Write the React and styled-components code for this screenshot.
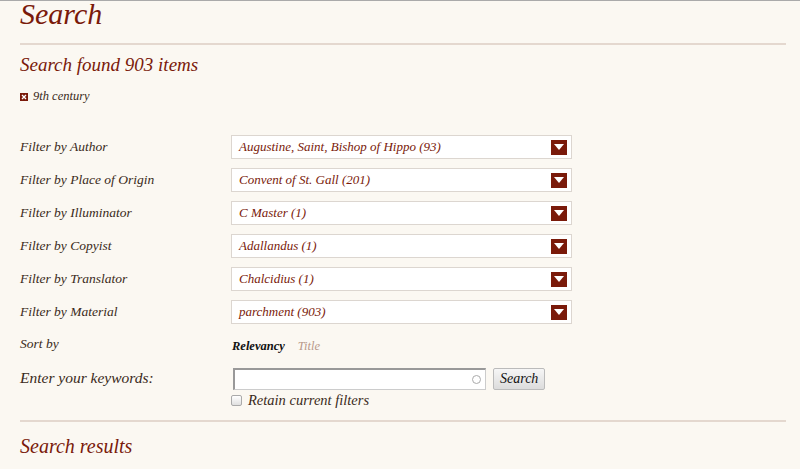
import { Fragment } from 'react';
import styled, { createGlobalStyle } from 'styled-components';

const GlobalStyle = createGlobalStyle`
  body {
    margin: 0;
    background: #fbf8f2;
    font-family: "Liberation Serif", "DejaVu Serif", serif;
    font-style: italic;
  }
`;

const Page = styled.div`
  border-top: 1px solid #aaa;
  padding: 0 14px 0 20px;
  color: #7a1a0a;
`;

const Title = styled.h1`
  margin: 0;
  font-size: 30px;
  font-weight: normal;
  line-height: 26px;
  height: 28px;
`;

const Rule = styled.hr`
  border: none;
  border-top: 2px solid #e4d8cf;
  margin: ${(p) => p.$m || '14px 0 0'};
`;

const Subtitle = styled.h2`
  margin: ${(p) => p.$m || '8px 0 0'};
  font-size: ${(p) => p.$size || '19px'};
  font-weight: normal;
  line-height: 24px;
`;

const Facet = styled.div`
  display: flex;
  align-items: center;
  gap: 5px;
  margin-top: 12px;
  font-size: 12.5px;
  color: #3a2a20;
`;

const CloseBox = styled.span`
  display: inline-flex;
  align-items: center;
  justify-content: center;
  width: 8px;
  height: 8px;
  background: #7a1a0a;
`;

const Form = styled.div`
  margin-top: 31px;
  display: grid;
  grid-template-columns: 211px 1fr;
  row-gap: 9px;
  align-items: center;
`;

const Label = styled.div`
  font-size: ${(p) => p.$size || '13.5px'};
  color: #3a2a20;
  align-self: ${(p) => (p.$offset ? 'start' : 'center')};
  margin-top: ${(p) => p.$offset || 0}px;
`;

const Select = styled.div`
  width: 341px;
  height: 24px;
  box-sizing: border-box;
  border: 1px solid #dcd6d0;
  background: #fff;
  display: flex;
  align-items: center;
  justify-content: space-between;
  padding: 0 4px 0 7px;
  font-size: 13px;
  color: #7a1a0a;
`;

const Arrow = styled.span`
  display: inline-flex;
  align-items: center;
  justify-content: center;
  width: 16px;
  height: 15px;
  background: #7a1a0a;
`;

const SortLinks = styled.div`
  display: flex;
  gap: 13px;
  font-size: 12.5px;
  padding-left: 1px;
  margin-top: 6px;
`;

const SortLink = styled.span`
  color: ${(p) => (p.$active ? '#111' : '#b8998a')};
  font-weight: ${(p) => (p.$active ? 'bold' : 'normal')};
`;

const SearchRow = styled.div`
  display: flex;
  gap: 7px;
  padding-left: 2px;
  margin-top: 5px;
`;

const InputBox = styled.div`
  width: 253px;
  height: 22px;
  box-sizing: border-box;
  background: #fff;
  border: 1px solid #ccc;
  border-top: 2px solid #999;
  border-left: 2px solid #999;
  display: flex;
  align-items: center;
  justify-content: flex-end;
  padding-right: 4px;
`;

const Ring = styled.span`
  width: 7px;
  height: 7px;
  border: 1px solid #aaa;
  border-radius: 50%;
`;

const Button = styled.button`
  height: 22px;
  padding: 0 6px;
  border: 1px solid #bbb;
  border-radius: 2px;
  background: linear-gradient(#f6f6f6, #dcdcdc);
  font-family: inherit;
  font-style: italic;
  font-size: 14px;
  color: #111;
`;

const Keywords = styled.div``;

const Retain = styled.label`
  display: flex;
  align-items: center;
  gap: 6px;
  margin-top: 2px;
  font-size: 14.5px;
  color: #3a2a20;
`;

const Check = styled.span`
  width: 9px;
  height: 9px;
  border: 1px solid #aaa;
  border-radius: 2px;
  background: linear-gradient(#fff, #e0e0e0);
`;

const filters = [
  ['Author', 'Augustine, Saint, Bishop of Hippo (93)'],
  ['Place of Origin', 'Convent of St. Gall (201)'],
  ['Illuminator', 'C Master (1)'],
  ['Copyist', 'Adallandus (1)'],
  ['Translator', 'Chalcidius (1)'],
  ['Material', 'parchment (903)'],
];

export default function App() {
  return (
    <Page>
      <GlobalStyle />
      <Title>Search</Title>
      <Rule />
      <Subtitle>Search found 903 items</Subtitle>
      <Facet>
        <CloseBox>
          <svg width="6" height="6" viewBox="0 0 6 6">
            <path d="M1 1L5 5M5 1L1 5" stroke="#fff" strokeWidth="1.3" />
          </svg>
        </CloseBox>
        9th century
      </Facet>
      <Form>
        {filters.map(([name, value]) => (
          <Fragment key={name}>
            <Label>Filter by {name}</Label>
            <Select>
              {value}
              <Arrow>
                <svg width="10" height="6" viewBox="0 0 10 6">
                  <path d="M0 0H10L5 6Z" fill="#fff" />
                </svg>
              </Arrow>
            </Select>
          </Fragment>
        ))}
        <Label>Sort by</Label>
        <SortLinks>
          <SortLink $active>Relevancy</SortLink>
          <SortLink>Title</SortLink>
        </SortLinks>
        <Label $offset={6} $size="15.5px">Enter your keywords:</Label>
        <Keywords>
          <SearchRow>
            <InputBox><Ring /></InputBox>
            <Button>Search</Button>
          </SearchRow>
          <Retain><Check />Retain current filters</Retain>
        </Keywords>
      </Form>
      <Rule $m="11px 0 0" />
      <Subtitle $m="12px 0 0" $size="20px">Search results</Subtitle>
    </Page>
  );
}
